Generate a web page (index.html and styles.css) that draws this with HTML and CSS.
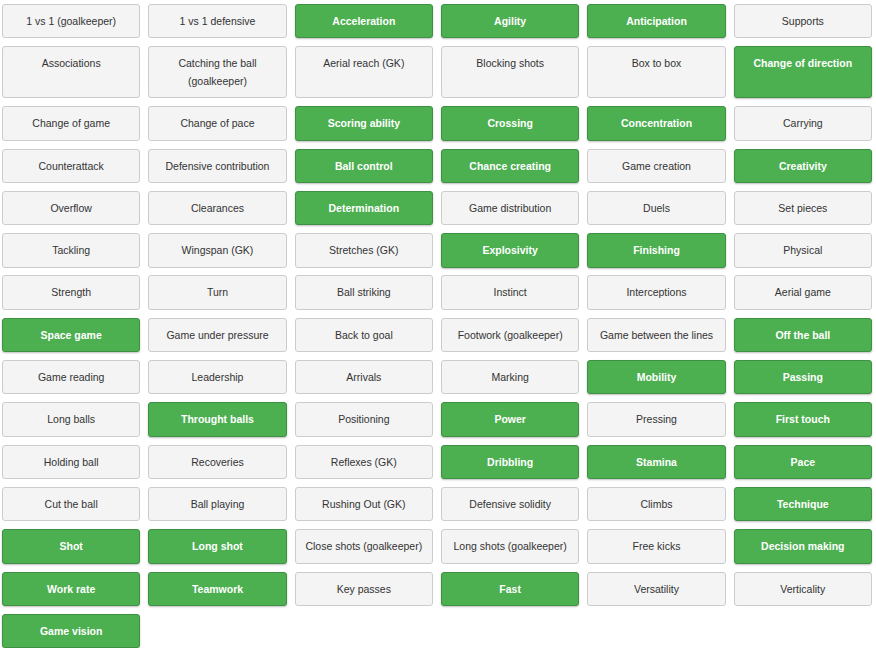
FILE: index.html
```html
<!DOCTYPE html>
<html lang="en">
<head>
<meta charset="utf-8">
<title>Skills</title>
<link rel="stylesheet" href="styles.css">
</head>
<body>
<div class="grid">
  <div class="tag">1 vs 1 (goalkeeper)</div>
  <div class="tag">1 vs 1 defensive</div>
  <div class="tag on">Acceleration</div>
  <div class="tag on">Agility</div>
  <div class="tag on">Anticipation</div>
  <div class="tag">Supports</div>

  <div class="tag">Associations</div>
  <div class="tag">Catching the ball (goalkeeper)</div>
  <div class="tag">Aerial reach (GK)</div>
  <div class="tag">Blocking shots</div>
  <div class="tag">Box to box</div>
  <div class="tag on">Change of direction</div>

  <div class="tag">Change of game</div>
  <div class="tag">Change of pace</div>
  <div class="tag on">Scoring ability</div>
  <div class="tag on">Crossing</div>
  <div class="tag on">Concentration</div>
  <div class="tag">Carrying</div>

  <div class="tag">Counterattack</div>
  <div class="tag">Defensive contribution</div>
  <div class="tag on">Ball control</div>
  <div class="tag on">Chance creating</div>
  <div class="tag">Game creation</div>
  <div class="tag on">Creativity</div>

  <div class="tag">Overflow</div>
  <div class="tag">Clearances</div>
  <div class="tag on">Determination</div>
  <div class="tag">Game distribution</div>
  <div class="tag">Duels</div>
  <div class="tag">Set pieces</div>

  <div class="tag">Tackling</div>
  <div class="tag">Wingspan (GK)</div>
  <div class="tag">Stretches (GK)</div>
  <div class="tag on">Explosivity</div>
  <div class="tag on">Finishing</div>
  <div class="tag">Physical</div>

  <div class="tag">Strength</div>
  <div class="tag">Turn</div>
  <div class="tag">Ball striking</div>
  <div class="tag">Instinct</div>
  <div class="tag">Interceptions</div>
  <div class="tag">Aerial game</div>

  <div class="tag on">Space game</div>
  <div class="tag">Game under pressure</div>
  <div class="tag">Back to goal</div>
  <div class="tag">Footwork (goalkeeper)</div>
  <div class="tag">Game between the lines</div>
  <div class="tag on">Off the ball</div>

  <div class="tag">Game reading</div>
  <div class="tag">Leadership</div>
  <div class="tag">Arrivals</div>
  <div class="tag">Marking</div>
  <div class="tag on">Mobility</div>
  <div class="tag on">Passing</div>

  <div class="tag">Long balls</div>
  <div class="tag on">Throught balls</div>
  <div class="tag">Positioning</div>
  <div class="tag on">Power</div>
  <div class="tag">Pressing</div>
  <div class="tag on">First touch</div>

  <div class="tag">Holding ball</div>
  <div class="tag">Recoveries</div>
  <div class="tag">Reflexes (GK)</div>
  <div class="tag on">Dribbling</div>
  <div class="tag on">Stamina</div>
  <div class="tag on">Pace</div>

  <div class="tag">Cut the ball</div>
  <div class="tag">Ball playing</div>
  <div class="tag">Rushing Out (GK)</div>
  <div class="tag">Defensive solidity</div>
  <div class="tag">Climbs</div>
  <div class="tag on">Technique</div>

  <div class="tag on">Shot</div>
  <div class="tag on">Long shot</div>
  <div class="tag">Close shots (goalkeeper)</div>
  <div class="tag">Long shots (goalkeeper)</div>
  <div class="tag">Free kicks</div>
  <div class="tag on">Decision making</div>

  <div class="tag on">Work rate</div>
  <div class="tag on">Teamwork</div>
  <div class="tag">Key passes</div>
  <div class="tag on">Fast</div>
  <div class="tag">Versatility</div>
  <div class="tag">Verticality</div>

  <div class="tag on">Game vision</div>
</div>
</body>
</html>
```

FILE: styles.css
```css
html, body {
  margin: 0;
  padding: 0;
  background: #ffffff;
}

body {
  font-family: "Liberation Sans", Arial, sans-serif;
  font-size: 10.5px;
  color: #333333;
}

.grid {
  display: grid;
  grid-template-columns: repeat(6, 1fr);
  column-gap: 8px;
  row-gap: 7.93px;
  width: 870px;
  margin: 4px 0 0 2px;
}

.tag {
  box-sizing: border-box;
  background: #f4f4f4;
  border: 1px solid #cccccc;
  border-radius: 3px;
  padding: 8px 6px 6.8px;
  line-height: 17.6px;
  text-align: center;
  color: #333333;
}

.tag.on {
  background: #4caf50;
  border-color: #3e9142;
  color: #ffffff;
  font-weight: bold;
  box-shadow: 0 1px 2px rgba(0, 0, 0, 0.25);
}
```
